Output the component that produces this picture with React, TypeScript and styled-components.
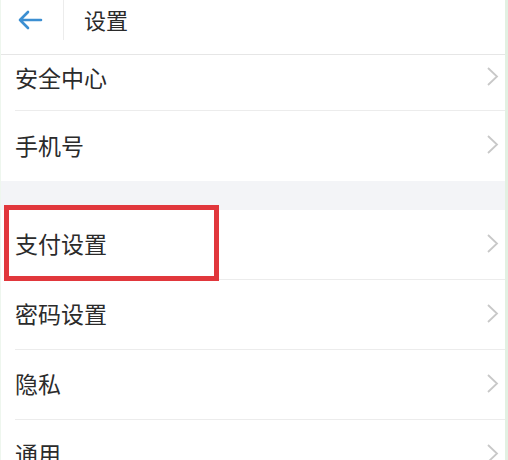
import React from "react";
import styled, { createGlobalStyle } from "styled-components";

const GlobalStyle = createGlobalStyle`
  html, body {
    margin: 0;
    padding: 0;
    background: #ffffff;
  }
  body {
    font-family: "Noto Sans CJK SC", "Noto Sans", sans-serif;
    overflow: hidden;
  }
`;

const Screen = styled.div`
  width: 508px;
  height: 460px;
  overflow: hidden;
  box-sizing: border-box;
  border-right: 3px solid #e2f0e2;
  border-left: 1px solid #eef6ee;
  background: #ffffff;
`;

const Header = styled.div`
  display: flex;
  align-items: flex-start;
  height: 55px;
  box-sizing: border-box;
  border-bottom: 1px solid #e6e6e6;
`;

const BackButton = styled.div`
  display: flex;
  align-items: center;
  justify-content: center;
  width: 62px;
  height: 40px;
  border-right: 1px solid #ececec;
  svg {
    display: block;
    margin-left: -4px;
  }
`;

const Title = styled.div`
  margin-left: 20px;
  height: 40px;
  line-height: 40px;
  font-size: 22px;
  color: #2a2a2a;
  margin-top: -1px;
`;

const Row = styled.div<{ $height?: number; $last?: boolean }>`
  display: flex;
  align-items: center;
  justify-content: space-between;
  height: ${(p) => p.$height ?? 70}px;
  box-sizing: border-box;
  margin-left: 14px;
  padding-right: 6px;
  padding-bottom: 3px;
  border-bottom: ${(p) => (p.$last ? "none" : "1px solid #ececec")};
`;

/* first row is partly scrolled under the header */
const ClippedRow = styled(Row)`
  padding-bottom: 12px;
`;

const Label = styled.span`
  font-size: 23px;
  color: #2b2b2b;
  line-height: 30px;
`;

const Gap = styled.div`
  height: 29px;
  background: #f3f4f7;
`;

const Highlight = styled.div`
  position: absolute;
  left: 3px;
  top: -5px;
  width: 215px;
  height: 76px;
  box-sizing: border-box;
  border: 5px solid #e1373c;
  pointer-events: none;
`;

const Section = styled.div`
  position: relative;
`;

const Chevron = () => (
  <svg width="13" height="21" viewBox="0 0 13 21">
    <path d="M2 2 L11 10.5 L2 19" fill="none" stroke="#c8c8c8" strokeWidth="1.8" />
  </svg>
);

const BackArrow = () => (
  <svg width="26" height="20" viewBox="0 0 26 20">
    <path
      d="M24 10 H3 M11 2 L3 10 L11 18"
      fill="none"
      stroke="#3c8fd2"
      strokeWidth="2.6"
      strokeLinecap="round"
      strokeLinejoin="round"
    />
  </svg>
);

const App = () => {
  return (
    <Screen>
      <GlobalStyle />
      <Header>
        <BackButton>
          <BackArrow />
        </BackButton>
        <Title>设置</Title>
      </Header>
      <ClippedRow $height={56}>
        <Label>安全中心</Label>
        <Chevron />
      </ClippedRow>
      <Row $last>
        <Label>手机号</Label>
        <Chevron />
      </Row>
      <Gap />
      <Section>
        <Row>
          <Label>支付设置</Label>
          <Chevron />
        </Row>
        <Highlight />
      </Section>
      <Row>
        <Label>密码设置</Label>
        <Chevron />
      </Row>
      <Row>
        <Label>隐私</Label>
        <Chevron />
      </Row>
      <Row>
        <Label>通用</Label>
        <Chevron />
      </Row>
    </Screen>
  );
};

export default App;
